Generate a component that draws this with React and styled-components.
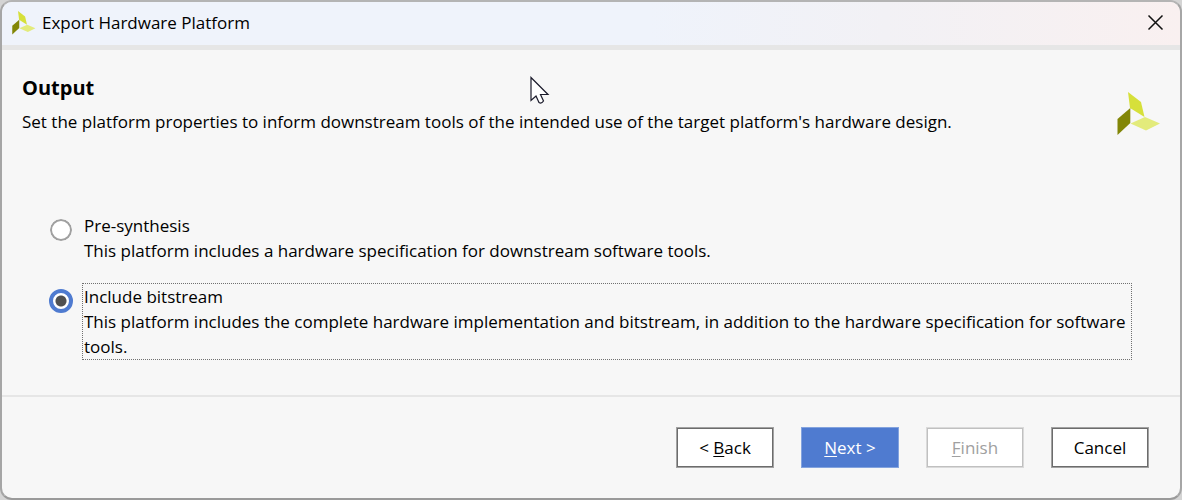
import React, { useState } from "react";
import styled, { createGlobalStyle, css } from "styled-components";

const GlobalStyle = createGlobalStyle`
  *, *::before, *::after { box-sizing: border-box; }
  body {
    margin: 0;
    background: #d4d4d4;
    color: #000;
    font: 17px/25px "Open Sans", "Noto Sans", sans-serif;
  }
`;

const Dialog = styled.main`
  display: flex;
  flex-direction: column;
  min-height: 100vh;
  overflow: hidden;
  border: 2px solid #a6a6a6;
  border-top-color: #b4b4b4;
  border-bottom-color: #9a9a9a;
  border-radius: 12px;
  background: #f7f7f7;
`;

const TitleBar = styled.header`
  display: flex;
  align-items: center;
  gap: 6px;
  height: 48px;
  padding: 0 16px 2px 10px;
  border-bottom: 5px solid #e6e6e6;
  background: linear-gradient(to right, #eff3fb 55%, #f2f1f5 75%, #f9f0f0);
`;

const WindowTitle = styled.span`
  flex: 1;
`;

const CloseButton = styled.button`
  display: flex;
  padding: 0;
  border: 0;
  background: none;
`;

const Intro = styled.section`
  display: flex;
  justify-content: space-between;
  align-items: flex-start;
  padding: 25px 19px 0 20px;
`;

const Heading = styled.h1`
  margin: 0 0 9px;
  font-size: 20px;
  line-height: 25px;
`;

const Description = styled.p`
  margin: 0;
`;

const BrandMark = styled.div`
  display: flex;
  flex: none;
  padding-top: 17px;
`;

const Options = styled.fieldset`
  display: flex;
  flex-direction: column;
  gap: 21px;
  margin: 0;
  padding: 77px 49px 36px 47px;
  border: 0;
`;

const Option = styled.div`
  display: flex;
  align-items: flex-start;
  gap: 10px;
`;

const Radio = styled.input`
  appearance: none;
  flex: none;
  width: 24px;
  height: 24px;
  margin: 5px 0 0;
  border: 1px solid #f7f7f7;
  border-radius: 50%;
  outline: none;
  background: #fff;
  box-shadow: inset 0 0 0 2px #a0a0a0;

  &:checked {
    border: 4px solid #4f7bd0;
    background: radial-gradient(circle, #505050 5px, #fff 6px);
    box-shadow: none;
  }
`;

const OptionLabel = styled.label`
  flex: 1;
  padding-left: 1px;
  outline: ${(p) => (p.$active ? "1px dotted #707070" : "none")};
`;

const OptionName = styled.span`
  display: block;
`;

const Footer = styled.footer`
  display: flex;
  justify-content: flex-end;
  gap: 27px;
  padding: 30px 31px 30px;
  border-top: 2px solid #e6e6e6;
`;

const variants = {
  normal: css`
    border: 1px solid #a2a2a2;
    box-shadow: inset 0 0 0 1px #6c6c6c;
    background: #fff;
    color: #000;
  `,
  primary: css`
    border: 1px solid #83a3de;
    background: #4f7bd0;
    color: #fff;
  `,
  disabled: css`
    border: 1px solid #dadada;
    box-shadow: inset 0 0 0 1px #c0c0c0;
    background: #fff;
    color: #a0a0a0;
  `,
};

const Button = styled.button`
  width: 98px;
  height: 41px;
  padding: 0;
  font: inherit;
  ${(p) => variants[p.$variant || "normal"]}
`;

const Mnemonic = styled.span`
  text-decoration: underline;
  text-decoration-thickness: 1px;
  text-underline-offset: 2px;
`;

const Pointer = styled.svg`
  position: absolute;
  top: 76px;
  left: 530px;
  pointer-events: none;
`;

function Logo({ size }) {
  return (
    <svg width={size} height={size} viewBox="0 0 44 44" aria-hidden="true">
      <path d="M11 0 L24 10 L27.500 25 L13 16 Z" fill="#d6e03a" />
      <path d="M0.500 27 L13.300 16 V31 L0.500 43 Z" fill="#828607" />
      <path d="M13.500 31.500 L28 25 L43 31.500 L29 38.500 Z" fill="#e3eb7b" />
    </svg>
  );
}

const options = [
  {
    id: "pre-synthesis",
    name: "Pre-synthesis",
    text: "This platform includes a hardware specification for downstream software tools.",
  },
  {
    id: "bitstream",
    name: "Include bitstream",
    text: "This platform includes the complete hardware implementation and bitstream, in addition to the hardware specification for software tools.",
  },
];

export default function App() {
  const [selected, setSelected] = useState("bitstream");
  return (
    <>
      <GlobalStyle />
      <Dialog>
        <TitleBar>
          <Logo size={24} />
          <WindowTitle>Export Hardware Platform</WindowTitle>
          <CloseButton type="button" aria-label="Close">
            <svg width="17" height="17" viewBox="0 0 17 17" fill="none" stroke="#111" strokeWidth="1.500">
              <path d="M1.500 1.500 L15.500 15.500 M15.500 1.500 L1.500 15.500" />
            </svg>
          </CloseButton>
        </TitleBar>
        <Intro>
          <div>
            <Heading>Output</Heading>
            <Description>
              Set the platform properties to inform downstream tools of the intended use of the target platform's hardware design.
            </Description>
          </div>
          <BrandMark>
            <Logo size={44} />
          </BrandMark>
        </Intro>
        <Options aria-label="Output">
          {options.map((o) => (
            <Option key={o.id}>
              <Radio
                type="radio"
                name="output"
                id={o.id}
                checked={selected === o.id}
                onChange={() => setSelected(o.id)}
              />
              <OptionLabel htmlFor={o.id} $active={selected === o.id}>
                <OptionName>{o.name}</OptionName>
                {o.text}
              </OptionLabel>
            </Option>
          ))}
        </Options>
        <Footer>
          <Button type="button">&lt; <Mnemonic>B</Mnemonic>ack</Button>
          <Button type="button" $variant="primary"><Mnemonic>N</Mnemonic>ext &gt;</Button>
          <Button type="button" $variant="disabled" disabled><Mnemonic>F</Mnemonic>inish</Button>
          <Button type="button">Cancel</Button>
        </Footer>
        <Pointer width="20" height="30" viewBox="0 0 20 30" aria-hidden="true">
          <path
            d="M1 1.500 V24.500 L6 20 L9 26.500 Q11.500 28 13.500 25 L10.500 18.500 H18 Z"
            fill="#fff"
            stroke="#1b1b2b"
            strokeWidth="1.200"
          />
        </Pointer>
      </Dialog>
    </>
  );
}
